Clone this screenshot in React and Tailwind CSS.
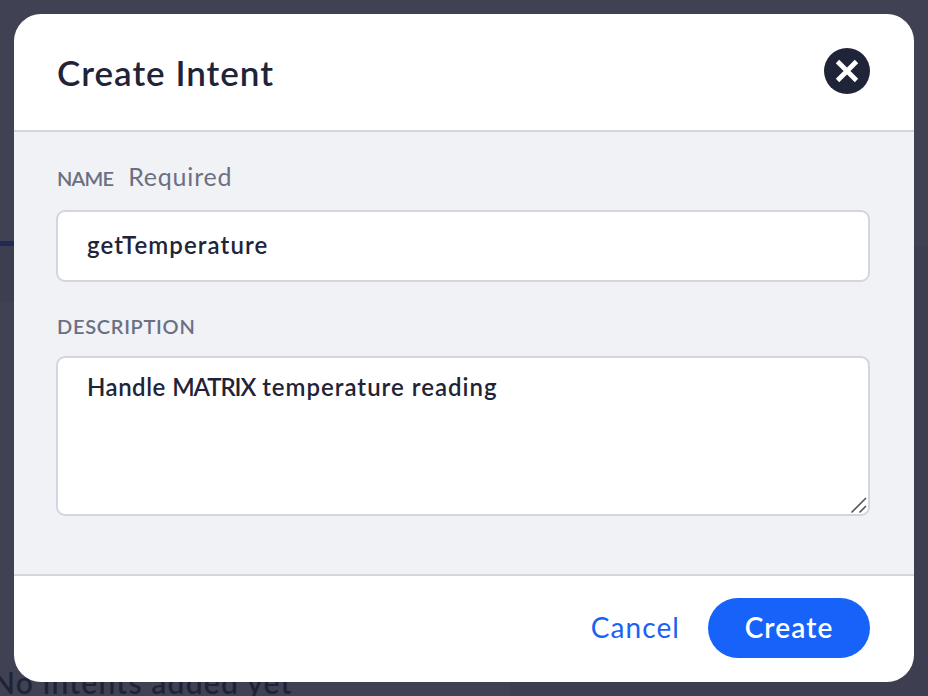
function Backdrop() {
  return (
    <div className="absolute inset-0 flex flex-col overflow-hidden bg-[#404254]">
      <div className="h-[241px] shrink-0" />
      <div className="h-[5px] w-[40px] shrink-0 bg-[#1f2b55]" />
      <div className="h-[56px] shrink-0 bg-[#3d3f50]" />
      <div className="flex grow justify-end">
        <div className="w-[418px] bg-[#3d3f50]" />
      </div>
      <p className="absolute -left-[8px] top-[664px] whitespace-nowrap text-[30px] font-semibold leading-[36px] tracking-[1.2px] text-[#1f2338]">
        No intents added yet
      </p>
    </div>
  );
}

function CloseButton() {
  return (
    <button aria-label="Close" className="mb-[2px] flex size-[46px] items-center justify-center rounded-full bg-[#1f2438]">
      <svg width="24" height="24" viewBox="0 0 24 24" fill="none" stroke="white" strokeWidth="4.8">
        <path d="M2.5 2.5 21.5 21.5M21.5 2.5 2.5 21.5" />
      </svg>
    </button>
  );
}

export default function App() {
  return (
    <div className="relative h-[696px] w-[928px] overflow-hidden p-[14px] font-['Lato','Liberation_Sans',sans-serif] text-[#1f2438]">
      <Backdrop />
      <section className="relative flex h-[668px] w-[900px] flex-col overflow-hidden rounded-[27px] bg-white">
        <header className="flex h-[118px] shrink-0 items-center justify-between border-b-2 border-[#d4d5df] pl-[43px] pr-[44px]">
          <h1 className="pb-px text-[35px] font-semibold leading-[42px] tracking-[1px]">Create Intent</h1>
          <CloseButton />
        </header>
        <div className="flex grow flex-col bg-[#f1f2f6] pl-[42px] pr-[44px] pt-[28px]">
          <label className="flex h-[32px] items-baseline gap-[15px] pl-px text-[#6b6f84]">
            <span className="text-[20px] font-semibold leading-[32px] tracking-[-0.8px]">NAME</span>
            <span className="text-[25px] leading-[32px] tracking-[0.8px]">Required</span>
          </label>
          <div className="mt-[18px] flex h-[72px] items-center rounded-[9px] border-2 border-[#d4d5df] bg-white px-[29px] pb-[2px]">
            <span className="text-[24px] font-semibold leading-[32px] tracking-[1.1px]">getTemperature</span>
          </div>
          <label className="mt-[28px] h-[32px] pl-px text-[20px] font-semibold leading-[32px] tracking-[0.7px] text-[#6b6f84]">DESCRIPTION</label>
          <div className="relative mt-[14px] h-[160px] rounded-[9px] border-2 border-[#d4d5df] bg-white px-[29px] pt-[13px]">
            <p className="text-[24px] font-semibold leading-[32px] tracking-[1px]">
              <span className="tracking-[0.5px]">Handle </span>
              <span className="tracking-[-1.1px]">MATRIX</span> temperature reading
            </p>
            <svg className="absolute bottom-0 right-0" width="20" height="20" viewBox="0 0 20 20" stroke="#555" strokeWidth="1.6">
              <path d="M3.5 18.5 18 4M11.5 18.5 18 12" />
            </svg>
          </div>
        </div>
        <footer className="flex h-[108px] shrink-0 items-center justify-end gap-[28px] border-t-2 border-[#d4d5df] pb-[2px] pr-[44px]">
          <button className="pb-[2px] text-[28px] leading-[34px] tracking-[1.1px] text-[#1863f7]">Cancel</button>
          <button className="h-[60px] w-[162px] rounded-full bg-[#1762f8] pb-[2px] text-[28px] font-semibold leading-[36px] tracking-[1.1px] text-white">Create</button>
        </footer>
      </section>
    </div>
  );
}
